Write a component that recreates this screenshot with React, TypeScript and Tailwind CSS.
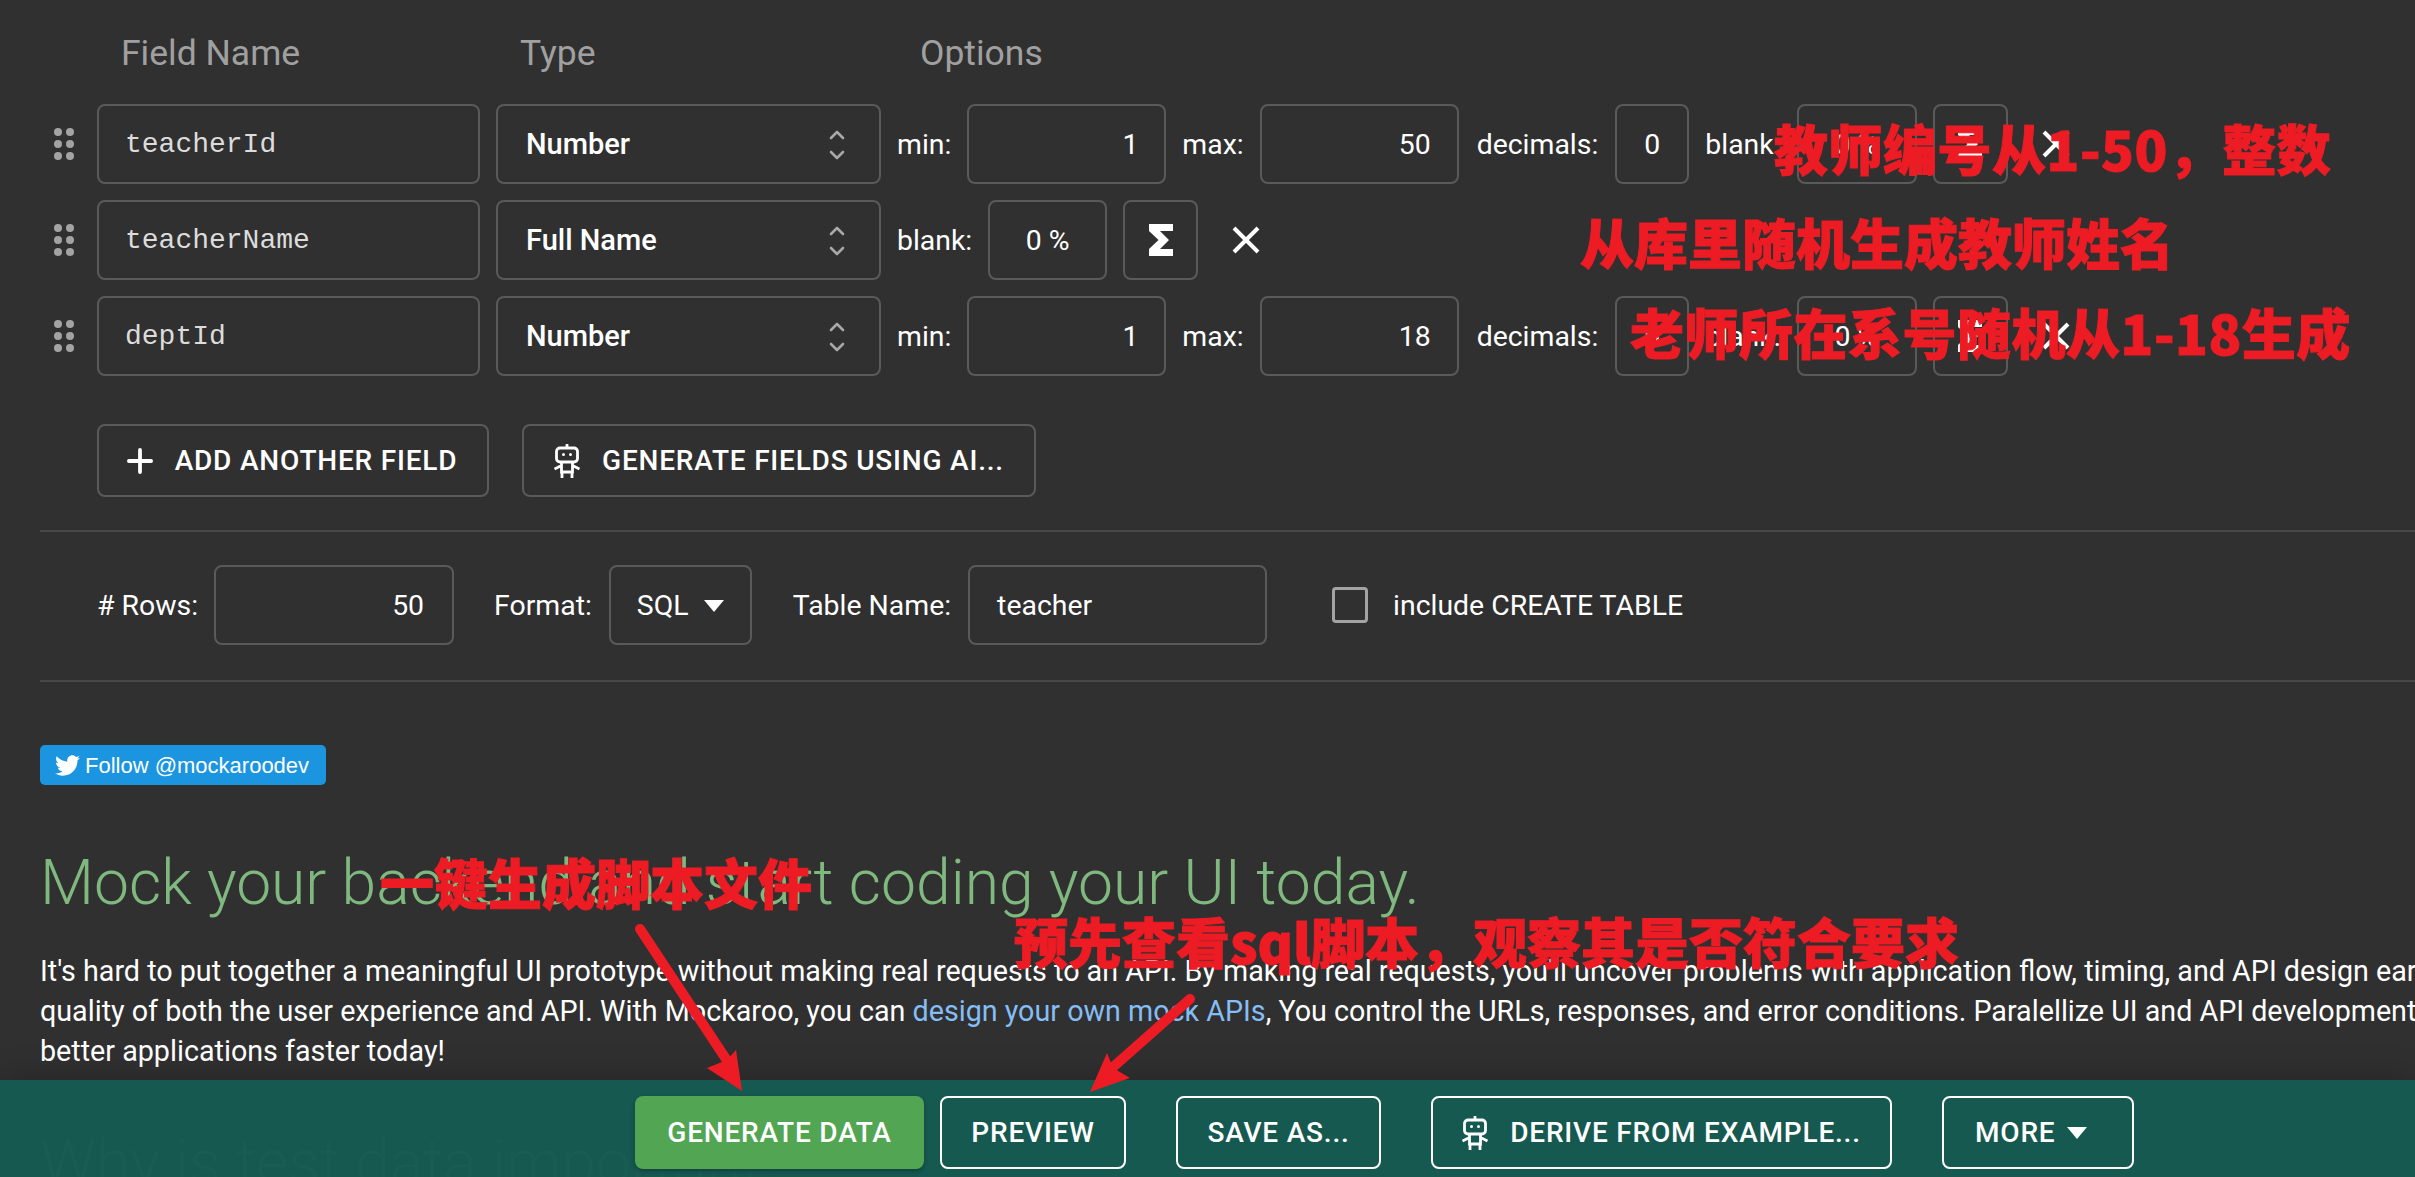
import { ChevronDown, ChevronUp, Plus } from "lucide-react";
import { FaTwitter } from "react-icons/fa";

const box = "flex h-20 shrink-0 items-center rounded-lg border-2 border-[#5a5a5a] pt-[2px] text-[28.4px] text-white";
const label = "shrink-0 pt-[2px] text-[28.4px] text-white";

function Grip() {
  return (
    <div className="grid w-[20px] shrink-0 grid-cols-2 gap-x-1 gap-y-1">
      {[0, 1, 2, 3, 4, 5].map((i) => (
        <span key={i} className="h-2 w-2 rounded-full bg-[#a3a3a3]" />
      ))}
    </div>
  );
}

function Sigma() {
  return (
    <svg width="24" height="32" viewBox="0 0 24 32" fill="#fff">
      <path d="M0 0H24V7H11L20 16L11 25H24V32H0V25L9.5 16L0 7Z" />
    </svg>
  );
}

function Cross() {
  return (
    <svg width="28" height="28" viewBox="0 0 28 28" stroke="#fff" strokeWidth="4" className="ml-[18px] shrink-0">
      <path d="M2 2L26 26M26 2L2 26" />
    </svg>
  );
}

function Robot() {
  return (
    <svg width="26" height="34" viewBox="0 0 26 34" fill="none" stroke="#fff" strokeWidth="2.8" className="mr-[6px] shrink-0">
      <path d="M13 0V4" />
      <rect x="2.5" y="4" width="21" height="14" rx="3.5" />
      <path d="M7.5 18V28H18.5V18M0.5 25L7.5 21.5M25.5 25L18.5 21.5M8 28V34M18 28V34" />
      <circle cx="9.5" cy="10.5" r="1.5" fill="#fff" stroke="none" />
      <circle cx="16.5" cy="10.5" r="1.5" fill="#fff" stroke="none" />
    </svg>
  );
}

function Triangle() {
  return (
    <svg width="20" height="12" viewBox="0 0 20 12" fill="#fff" className="shrink-0">
      <path d="M0 0H20L10 12Z" />
    </svg>
  );
}

function NameInput({ value }: { value: string }) {
  return (
    <div className={`${box} w-[383px] pl-[26px] font-['Liberation_Mono',monospace] !text-[28px] !text-[#dcdcdc]`}>
      {value}
    </div>
  );
}

function TypeSelect({ value }: { value: string }) {
  return (
    <div className={`${box} w-[385px] justify-between pl-[28px] pr-[30px] !text-[29px] font-medium`}>
      {value}
      <div className="flex flex-col text-[#a8a8a8]">
        <ChevronUp size={24} strokeWidth={2.6} className="-mb-[2px]" />
        <ChevronDown size={24} strokeWidth={2.6} className="-mt-[2px]" />
      </div>
    </div>
  );
}

function NumberBox({ value, width }: { value: string; width: string }) {
  return <div className={`${box} ${width} justify-end pr-[26px]`}>{value}</div>;
}

function Actions() {
  return (
    <>
      <div className={`${box} w-[75px] justify-center !pt-0`}>
        <Sigma />
      </div>
      <Cross />
    </>
  );
}

function NumberOptions({ max }: { max: string }) {
  return (
    <>
      <span className={label}>min:</span>
      <NumberBox value="1" width="w-[199px]" />
      <span className={label}>max:</span>
      <NumberBox value={max} width="w-[199px]" />
      <span className={`${label} ml-[2px]`}>decimals:</span>
      <div className={`${box} ml-[1px] w-[74px] justify-center`}>0</div>
      <span className={label}>blank:</span>
      <div className={`${box} w-[120px] justify-center`}>0 %</div>
      <Actions />
    </>
  );
}

function FieldRow({ name, type, children }: { name: string; type: string; children: React.ReactNode }) {
  return (
    <div className="flex items-center gap-4 pl-[14px]">
      <div className="mr-[7px]">
        <Grip />
      </div>
      <NameInput value={name} />
      <TypeSelect value={type} />
      {children}
    </div>
  );
}

function OutlineButton({ width, children, light }: { width: string; children: React.ReactNode; light?: boolean }) {
  return (
    <div
      className={`flex h-[73px] shrink-0 items-center justify-center gap-4 rounded-lg border-2 text-[28px] font-medium tracking-[0.8px] text-white ${width} ${
        light ? "border-white" : "border-[#5a5a5a]"
      }`}
    >
      {children}
    </div>
  );
}

function Note({ className, children }: { className: string; children: React.ReactNode }) {
  return (
    <div
      className={`absolute whitespace-nowrap font-['Noto_Sans_CJK_SC',sans-serif] text-[54px] font-black leading-[60px] text-[#ed1c24] [-webkit-text-stroke:1px_#ed1c24] ${className}`}
    >
      {children}
    </div>
  );
}

export default function App() {
  return (
    <div className="relative h-screen w-full overflow-hidden bg-[#303030] font-['Roboto',sans-serif]">
      <div className="pl-10">
        <div className="flex h-[104px] pt-[33px] text-[35.5px] leading-10 text-[#a0a0a0]">
          <div className="w-[480px] pl-[81px]">Field Name</div>
          <div className="w-[400px]">Type</div>
          <div>Options</div>
        </div>

        <div className="flex flex-col gap-4">
          <FieldRow name="teacherId" type="Number">
            <NumberOptions max="50" />
          </FieldRow>
          <FieldRow name="teacherName" type="Full Name">
            <span className={label}>blank:</span>
            <div className={`${box} w-[119px] justify-center`}>0 %</div>
            <Actions />
          </FieldRow>
          <FieldRow name="deptId" type="Number">
            <NumberOptions max="18" />
          </FieldRow>
        </div>

        <div className="mt-12 flex gap-[33px] pl-[57px]">
          <OutlineButton width="w-[392px]">
            <Plus size={38} strokeWidth={2.4} className="-ml-[8px]" />
            ADD ANOTHER FIELD
          </OutlineButton>
          <OutlineButton width="w-[514px]">
            <Robot />
            GENERATE FIELDS USING AI...
          </OutlineButton>
        </div>

        <div className="mt-[33px] h-[2px] bg-[#484848]" />

        <div className="mt-[33px] flex h-20 items-center pl-[57px]">
          <span className={`${label} mr-4`}># Rows:</span>
          <div className={`${box} w-[240px] justify-end pr-[28px]`}>50</div>
          <span className={`${label} ml-10 mr-[17px]`}>Format:</span>
          <div className={`${box} w-[143px] gap-4 pl-[26px]`}>
            SQL
            <Triangle />
          </div>
          <span className={`${label} ml-[41px] mr-[17px]`}>Table Name:</span>
          <div className={`${box} w-[299px] pl-[27px]`}>teacher</div>
          <span className="ml-[65px] h-9 w-9 rounded-[4px] border-[3px] border-[#a3a3a3]" />
          <span className={`${label} ml-[25px]`}>include CREATE TABLE</span>
        </div>

        <div className="mt-[35px] h-[2px] bg-[#484848]" />

        <div className="mt-[63px] flex h-10 w-[286px] items-center gap-[5px] rounded-[5px] bg-[#1b95e0] pl-[15px] font-['Liberation_Sans',sans-serif] text-[22px] text-white">
          <FaTwitter size={25} />
          Follow @mockaroodev
        </div>

        <h1 className="mt-[62px] whitespace-nowrap text-[62.4px] font-light leading-[72px] text-[#80b97f]">
          Mock your backend and start coding your UI today.
        </h1>

        <p className="mt-[32px] whitespace-nowrap text-[28.7px] leading-10 text-white">
          It's hard to put together a meaningful UI prototype without making real requests to an API. By making real requests, you'll uncover problems with application flow, timing, and API design early, improving the
          <br />
          quality of both the user experience and API. With Mockaroo, you can{" "}
          <span className="text-[#85bdf5]">design your own mock APIs</span>, You control the URLs, responses, and error conditions. Paralellize UI and API development and start building
          <br />
          better applications faster today!
        </p>

        <h2 className="mt-[56px] whitespace-nowrap text-[62.4px] font-light leading-[72px] text-[#80b97f]">
          Why is test data important?
        </h2>
      </div>

      {/* sticky action bar, page text shows through it faintly */}
      <div className="absolute bottom-0 left-0 right-0 flex h-[97px] items-start bg-[#155a52]/[0.98] pl-[635px] pt-4 shadow-[0_0_30px_rgba(0,0,0,0.25)]">
        <div className="flex h-[73px] w-[289px] items-center justify-center rounded-lg bg-[#52a552] text-[28px] font-medium tracking-[0.8px] text-white shadow-[0_2px_4px_rgba(0,0,0,0.3)]">
          GENERATE DATA
        </div>
        <div className="ml-4 flex gap-[50px]">
          <OutlineButton width="w-[186px]" light>
            PREVIEW
          </OutlineButton>
          <OutlineButton width="w-[205px]" light>
            SAVE AS...
          </OutlineButton>
          <OutlineButton width="w-[461px]" light>
            <Robot />
            DERIVE FROM EXAMPLE...
          </OutlineButton>
          <OutlineButton width="w-[192px] !justify-start pl-[31px] !gap-3" light>
            MORE
            <Triangle />
          </OutlineButton>
        </div>
      </div>

      <Note className="left-[1774px] top-[118px] tracking-[0.5px]">教师编号从1-50，整数</Note>
      <Note className="left-[1580px] top-[212px]">从库里随机生成教师姓名</Note>
      <Note className="left-[1630px] top-[302px] tracking-[0.5px]">老师所在系号随机从1-18生成</Note>
      <Note className="left-[380px] top-[852px]">一键生成脚本文件</Note>
      <Note className="left-[1014px] top-[911px]">预先查看sql脚本，观察其是否符合要求</Note>

      <svg className="absolute left-0 top-0" width="2415" height="1177" fill="#ed1c24" stroke="none">
        <path d="M640 929L726 1059" stroke="#ed1c24" strokeWidth="10" strokeLinecap="round" fill="none" />
        <path d="M742 1091L736 1050L727 1060L707 1068Z" />
        <path d="M1190 999L1112 1068" stroke="#ed1c24" strokeWidth="10" strokeLinecap="round" fill="none" />
        <path d="M1090 1092L1107 1053L1113 1068L1130 1078Z" />
      </svg>
    </div>
  );
}
